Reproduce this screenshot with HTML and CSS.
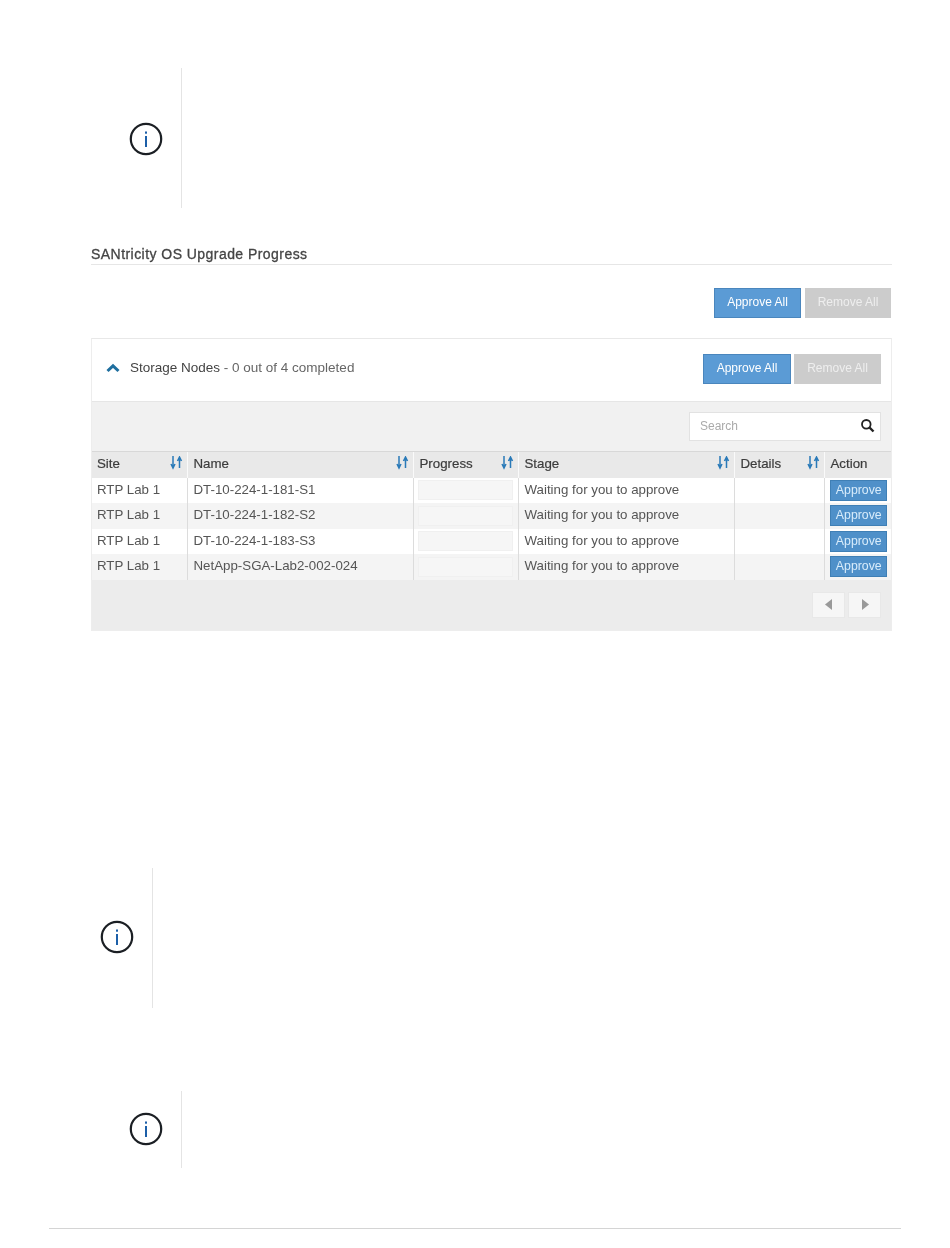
FILE: index.html
```html
<!DOCTYPE html>
<html lang="en">
<head>
	<meta charset="UTF-8">
	<title>SANtricity OS Upgrade Progress</title>
	<link rel="stylesheet" href="styles.css">
</head>
<body>
<svg class="sprites" width="0" height="0">
	<symbol id="info" viewBox="0 0 34 34">
		<circle cx="17" cy="17" r="15.2" fill="none" stroke="#1b1f24" stroke-width="2.2"/>
		<rect x="16" y="9.500" width="2" height="2.200" fill="#1c5fa8"/>
		<rect x="16" y="14" width="2" height="11" fill="#1c5fa8"/>
	</symbol>
	<symbol id="sort" viewBox="0 0 14 14">
		<path d="M4 0v11M2 8l2 4 2-4" fill="none" stroke="#2a7ab8" stroke-width="1.500"/>
		<path d="M10.500 12V2M8.500 5l2-4 2 4" fill="none" stroke="#2a7ab8" stroke-width="1.500"/>
	</symbol>
</svg>

<div class="note note-first">
	<div class="note-icon"><svg width="34" height="34"><use href="#info"/></svg></div>
	<div class="note-body"></div>
</div>

<h2 class="section-title">SANtricity OS Upgrade Progress</h2>

<div class="actions-top">
	<button class="btn btn-blue">Approve All</button>
	<button class="btn btn-gray">Remove All</button>
</div>

<div class="panel">
	<div class="panel-head">
		<svg class="chevron" width="14" height="10" viewBox="0 0 14 10"><path d="M1.500 8L7 2.800 12.500 8" fill="none" stroke="#1f6f9f" stroke-width="3"/></svg>
		<span class="panel-title"><span class="panel-name">Storage Nodes</span> - 0 out of 4 completed</span>
		<div class="panel-actions">
			<button class="btn btn-blue">Approve All</button>
			<button class="btn btn-gray">Remove All</button>
		</div>
	</div>
	<div class="toolbar">
		<div class="search">
			<span>Search</span>
			<svg width="15" height="15" viewBox="0 0 15 15"><circle cx="6.300" cy="6.300" r="4.300" fill="none" stroke="#222" stroke-width="1.800"/><path d="M9.500 9.500L13.500 13.500" stroke="#222" stroke-width="2.400"/></svg>
		</div>
	</div>
	<table class="grid">
		<colgroup>
			<col class="c-site"><col class="c-name"><col class="c-progress"><col class="c-stage"><col class="c-details"><col class="c-action">
		</colgroup>
		<thead>
			<tr>
				<th><div class="th-in">Site<svg width="14" height="14"><use href="#sort"/></svg></div></th>
				<th><div class="th-in">Name<svg width="14" height="14"><use href="#sort"/></svg></div></th>
				<th><div class="th-in">Progress<svg width="14" height="14"><use href="#sort"/></svg></div></th>
				<th><div class="th-in">Stage<svg width="14" height="14"><use href="#sort"/></svg></div></th>
				<th><div class="th-in">Details<svg width="14" height="14"><use href="#sort"/></svg></div></th>
				<th><div class="th-in">Action</div></th>
			</tr>
		</thead>
		<tbody>
			<tr>
				<td>RTP Lab 1</td>
				<td>DT-10-224-1-181-S1</td>
				<td><div class="bar"></div></td>
				<td>Waiting for you to approve</td>
				<td></td>
				<td class="cell-action"><button class="btn-small">Approve</button></td>
			</tr>
			<tr>
				<td>RTP Lab 1</td>
				<td>DT-10-224-1-182-S2</td>
				<td><div class="bar"></div></td>
				<td>Waiting for you to approve</td>
				<td></td>
				<td class="cell-action"><button class="btn-small">Approve</button></td>
			</tr>
			<tr>
				<td>RTP Lab 1</td>
				<td>DT-10-224-1-183-S3</td>
				<td><div class="bar"></div></td>
				<td>Waiting for you to approve</td>
				<td></td>
				<td class="cell-action"><button class="btn-small">Approve</button></td>
			</tr>
			<tr>
				<td>RTP Lab 1</td>
				<td>NetApp-SGA-Lab2-002-024</td>
				<td><div class="bar"></div></td>
				<td>Waiting for you to approve</td>
				<td></td>
				<td class="cell-action"><button class="btn-small">Approve</button></td>
			</tr>
		</tbody>
	</table>
	<div class="pager">
		<button class="page-btn"><svg width="8" height="11" viewBox="0 0 8 11"><path d="M7 0v11L0 5.500z" fill="#999"/></svg></button>
		<button class="page-btn"><svg width="8" height="11" viewBox="0 0 8 11"><path d="M1 0v11l7-5.500z" fill="#999"/></svg></button>
	</div>
</div>

<div class="note note-second">
	<div class="note-icon"><svg width="34" height="34"><use href="#info"/></svg></div>
	<div class="note-body"></div>
</div>

<div class="note note-third">
	<div class="note-icon"><svg width="34" height="34"><use href="#info"/></svg></div>
	<div class="note-body"></div>
</div>

<div class="page-rule"></div>
</body>
</html>
```

FILE: styles.css
```css
*{margin: 0;padding: 0;box-sizing: border-box;}
body{
	background: #fff;
	font-family: "Liberation Sans", Arial, sans-serif;
	color: #555;
	padding-top: 68px;
	filter: blur(0.4px);
}
button{
	font-family: inherit;
	border: 0;
}
.sprites{
	display: block;
	height: 0;
}

/* notes */
.note{
	display: flex;
}
.note-icon{
	width: 70px;
	display: flex;
	align-items: center;
	justify-content: center;
}
.note-body{
	border-left: 1px solid #e4e4e4;
	flex: 1;
}
.note-first{
	margin-left: 111px;
	height: 140px;
}
.note-first .note-icon{
	padding-top: 2px;
}
.note-second{
	margin-left: 81px;
	margin-top: 237px;
	height: 140px;
}
.note-second .note-icon{
	width: 71px;
	padding-bottom: 2px;
}
.note-third{
	margin-left: 111px;
	margin-top: 83px;
	height: 77px;
}
.note-third .note-icon{
	padding-bottom: 1px;
}

/* section */
.section-title{
	margin: 38px 58px 0 91px;
	height: 19px;
	border-bottom: 1px solid #e6e6e6;
	font-size: 14px;
	letter-spacing: 0.45px;
	font-weight: normal;
	line-height: 17px;
	color: #444;
	-webkit-text-stroke: 0.3px #444;
}
.actions-top{
	display: flex;
	justify-content: flex-end;
	gap: 4px;
	margin: 23px 59px 20px 0;
}
.btn{
	width: 87px;
	height: 30px;
	padding-bottom: 2px;
	font-size: 12px;
	color: #fff;
}
.btn-blue{
	background: #5b9bd5;
	border: 1px solid #4a86bd;
}
.btn-gray{
	background: #cccccc;
	color: #eee;
}
.actions-top .btn-gray{
	width: 86px;
}

/* panel */
.panel{
	margin: 0 58px 0 91px;
	border: 1px solid #ededed;
	border-top-color: #e8e8e8;
	background: #ececec;
}
.panel-head{
	display: flex;
	align-items: center;
	height: 63px;
	padding: 0 10px 0 14px;
	background: #fff;
	border-bottom: 1px solid #e6e6e6;
}
.chevron{
	margin: 0 10px 4px 0;
}
.panel-title{
	margin-bottom: 5px;
	font-size: 13.500px;
	color: #666;
}
.panel-name{
	color: #444;
}
.panel-actions{
	margin-left: auto;
	display: flex;
	gap: 3px;
	padding-bottom: 2px;
}
.panel-actions .btn-blue{
	width: 88px;
}
.toolbar{
	display: flex;
	justify-content: flex-end;
	height: 49px;
	padding: 10px 10px 0 0;
	background: #f1f1f1;
}
.search{
	display: flex;
	align-items: center;
	justify-content: space-between;
	width: 192px;
	height: 29px;
	padding: 0 5px 2px 10px;
	background: #fff;
	border: 1px solid #e2e2e2;
	font-size: 12px;
	color: #aaa;
}

/* table */
.grid{
	width: 100%;
	table-layout: fixed;
	border-collapse: collapse;
	font-size: 13.300px;
}
.c-site{width: 95px;}
.c-name{width: 226px;}
.c-progress{width: 105px;}
.c-stage{width: 216px;}
.c-details{width: 90px;}
.grid th{
	height: 26px;
	background: #e9e9e9;
	border-top: 1px solid #d8d8d8;
	border-left: 1px solid #fafafa;
	text-align: left;
	font-weight: normal;
	color: #3c3c3c;
	-webkit-text-stroke: 0.2px #3c3c3c;
}
.th-in{
	display: flex;
	align-items: center;
	justify-content: space-between;
	padding: 0 4px 3px 6px;
}
.grid th:first-child .th-in{
	padding-left: 5px;
}
.grid td{
	height: 25.500px;
	padding: 0 6px 2px;
	border-left: 1px solid #dcdcdc;
	background: #fff;
	white-space: nowrap;
}
.grid td:first-child{
	padding-left: 5px;
}
.grid td:first-child,
.grid th:first-child{
	border-left: 0;
}
.grid tbody tr:nth-child(even) td{
	background: #f4f4f4;
}
.bar{
	height: 20px;
	margin: 2px -1px 0 -2px;
	background: #f6f6f6;
	border: 1px solid #f0f0f0;
}
.grid td.cell-action{
	padding: 0 0 0 2px;
}
.btn-small{
	display: block;
	width: 57px;
	height: 21px;
	margin: 0 auto;
	padding-bottom: 1px;
	background: #4f90c9;
	border: 1px solid #3f7fb5;
	color: #d8ecfb;
	font-size: 12.300px;
}
.pager{
	display: flex;
	justify-content: flex-end;
	gap: 3px;
	height: 50px;
	padding: 12px 10px 0 0;
}
.page-btn{
	width: 33px;
	height: 26px;
	padding-top: 2px;
	background: #f6f6f6;
	border: 1px solid #e8e8e8;
}

.page-rule{
	margin: 60px 49px 0;
	height: 1px;
	background: #d4d4d4;
}
```
